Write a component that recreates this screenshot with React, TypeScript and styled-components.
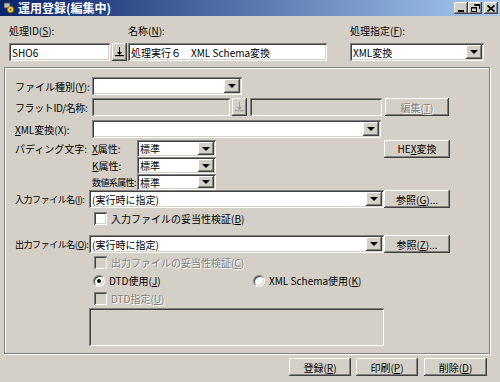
import React from 'react';
import styled, { createGlobalStyle } from 'styled-components';

const GlobalStyle = createGlobalStyle`
    html, body {
        margin: 0;
        padding: 0;
    }
    body {
        font-family: "Noto Sans CJK JP", "Liberation Sans", sans-serif;
        font-size: 10px;
        color: #000;
    }
`;

const sunken = `box-shadow: inset 1px 1px #808080, inset -1px -1px #ffffff, inset 2px 2px #404040, inset -2px -2px #d4d0c8;`;
const raised = `box-shadow: inset -1px -1px #404040, inset 1px 1px #ffffff, inset -2px -2px #808080, inset 2px 2px #d4d0c8;`;

const Window = styled.div`
    width: 500px;
    height: 382px;
    background: #d4d0c8;
    display: flex;
    flex-direction: column;
    overflow: hidden;
`;

const TitleBar = styled.div`
    height: 16px;
    background: linear-gradient(to right, #0a246a, #a6caf0);
    display: flex;
    align-items: center;
    padding: 0 2px 0 3px;
`;

const TitleText = styled.span`
    flex: 1;
    margin-left: 3px;
    color: #fff;
    font-weight: bold;
    font-size: 12px;
    line-height: 16px;
`;

const CaptionButton = styled.div<{ $gap?: number }>`
    width: 14px;
    height: 12px;
    margin-left: ${(p) => p.$gap ?? 0}px;
    background: #d4d0c8;
    ${raised}
    display: flex;
    align-items: center;
    justify-content: center;
`;

const TopSection = styled.div`
    display: flex;
    padding: 8px 0 0 9px;
`;

const FieldColumn = styled.div<{ $w: number }>`
    width: ${(p) => p.$w}px;
    display: flex;
    flex-direction: column;
`;

const TopLabel = styled.div`
    height: 14px;
    line-height: 14px;
    margin-bottom: 5px;
    white-space: nowrap;
`;

const InlineGroup = styled.div`
    display: flex;
    align-items: center;
`;

const Field = styled.div<{ $w: number; $h?: number; $ml?: number; $disabled?: boolean }>`
    width: ${(p) => p.$w}px;
    height: ${(p) => p.$h ?? 18}px;
    margin-left: ${(p) => p.$ml ?? 0}px;
    box-sizing: border-box;
    background: ${(p) => (p.$disabled ? '#d4d0c8' : '#ffffff')};
    ${sunken}
    padding: 2px 2px 2px 3px;
    display: flex;
    align-items: center;
    white-space: nowrap;
    overflow: hidden;
    line-height: 13px;
`;

const ComboBox = styled.div<{ $w: number; $h?: number }>`
    width: ${(p) => p.$w}px;
    height: ${(p) => p.$h ?? 18}px;
    box-sizing: border-box;
    background: #fff;
    ${sunken}
    padding: 2px;
    display: flex;
    align-items: stretch;
`;

const ComboText = styled.div`
    flex: 1;
    padding-left: 1px;
    display: flex;
    align-items: center;
    white-space: nowrap;
    overflow: hidden;
    line-height: 13px;
`;

const ArrowButton = styled.div`
    width: 16px;
    background: #d4d0c8;
    ${raised}
    display: flex;
    align-items: center;
    justify-content: center;
`;

const Triangle = styled.div`
    width: 0;
    height: 0;
    border-left: 4px solid transparent;
    border-right: 4px solid transparent;
    border-top: 4px solid #000;
`;

const Button = styled.div<{ $w: number; $h?: number; $ml?: number; $disabled?: boolean }>`
    width: ${(p) => p.$w}px;
    height: ${(p) => p.$h ?? 18}px;
    margin-left: ${(p) => p.$ml ?? 0}px;
    box-sizing: border-box;
    background: #d4d0c8;
    ${raised}
    display: flex;
    align-items: center;
    justify-content: center;
    white-space: nowrap;
    line-height: 13px;
    color: ${(p) => (p.$disabled ? '#808080' : '#000')};
    text-shadow: ${(p) => (p.$disabled ? '1px 1px #ffffff' : 'none')};
`;

const GroupBox = styled.div`
    margin: 6px 0 0 4px;
    width: 486px;
    height: 287px;
    box-sizing: border-box;
    border: 1px solid #808080;
    box-shadow: 1px 1px 0 #ffffff, inset 1px 1px 0 #ffffff;
    padding: 9px 0 0 10px;
    display: flex;
    flex-direction: column;
`;

const Row = styled.div<{ $mt?: number; $h: number }>`
    display: flex;
    align-items: center;
    height: ${(p) => p.$h}px;
    margin-top: ${(p) => p.$mt ?? 0}px;
`;

const Label = styled.div<{ $w: number; $fs?: number; $ls?: number }>`
    width: ${(p) => p.$w}px;
    flex-shrink: 0;
    white-space: nowrap;
    line-height: 13px;
    font-size: ${(p) => p.$fs ?? 10}px;
    letter-spacing: ${(p) => p.$ls ?? 0}px;
`;

const Spacer = styled.div<{ $w: number }>`
    width: ${(p) => p.$w}px;
    flex-shrink: 0;
`;

const U = styled.span`
    text-decoration: underline;
`;

const CheckItem = styled.div<{ $disabled?: boolean }>`
    display: flex;
    align-items: center;
    white-space: nowrap;
    line-height: 13px;
    color: ${(p) => (p.$disabled ? '#808080' : '#000')};
    text-shadow: ${(p) => (p.$disabled ? '1px 1px #ffffff' : 'none')};
`;

const CheckBox = styled.div<{ $disabled?: boolean }>`
    width: 13px;
    height: 13px;
    box-sizing: border-box;
    margin-right: 4px;
    background: ${(p) => (p.$disabled ? '#d4d0c8' : '#ffffff')};
    ${sunken}
`;

const RadioItem = styled.div<{ $w?: number }>`
    display: flex;
    align-items: center;
    white-space: nowrap;
    line-height: 13px;
    width: ${(p) => (p.$w ? `${p.$w}px` : 'auto')};
`;

const Radio = styled.div<{ $checked?: boolean }>`
    width: 12px;
    height: 12px;
    box-sizing: border-box;
    border-radius: 50%;
    margin-right: 4px;
    background: #fff;
    border: 1px solid;
    border-color: #808080 #ffffff #ffffff #808080;
    box-shadow: inset 1px 1px #404040, inset -1px -1px #d4d0c8;
    display: flex;
    align-items: center;
    justify-content: center;
    &::after {
        content: '';
        width: 4px;
        height: 4px;
        border-radius: 50%;
        background: ${(p) => (p.$checked ? '#000' : 'transparent')};
    }
`;

const TextArea = styled.div`
    margin-left: 74px;
    width: 295px;
    height: 38px;
    box-sizing: border-box;
    background: #d4d0c8;
    ${sunken}
`;

const Footer = styled.div`
    display: flex;
    justify-content: flex-end;
    padding: 4px 13px 0 0;
`;

const Combo: React.FC<{ w: number; h?: number; children?: React.ReactNode }> = ({ w, h, children }) => (
    <ComboBox $w={w} $h={h}>
        <ComboText>{children}</ComboText>
        <ArrowButton>
            <Triangle />
        </ArrowButton>
    </ComboBox>
);

const PickIcon: React.FC<{ color: string }> = ({ color }) => (
    <svg width="9" height="10" viewBox="0 0 9 10">
        <path d="M4 0h1v5h2l-2.5 3L2 5h2z" fill={color} />
        <rect x="0" y="8" width="9" height="1.2" fill={color} />
    </svg>
);

const AppIcon = () => (
    <svg width="12" height="12" viewBox="0 0 12 12">
        <rect x="1" y="1" width="6" height="5" fill="#c0c0c0" stroke="#404040" strokeWidth="0.8" />
        <circle cx="7.5" cy="7.5" r="3.2" fill="#f0d040" stroke="#806000" strokeWidth="0.8" />
        <circle cx="7.5" cy="7.5" r="1" fill="#806000" />
    </svg>
);

const App: React.FC = () => {
    return (
        <>
            <GlobalStyle />
            <Window>
                <TitleBar>
                    <AppIcon />
                    <TitleText>運用登録(編集中)</TitleText>
                    <CaptionButton>
                        <svg width="8" height="7" viewBox="0 0 8 7">
                            <rect x="1" y="5" width="6" height="2" fill="#000" />
                        </svg>
                    </CaptionButton>
                    <CaptionButton $gap={0}>
                        <svg width="9" height="8" viewBox="0 0 9 8">
                            <path d="M3 0h6v5H8V2H4V1H3z M3 0h6v1.5H3z" fill="#000" />
                            <path d="M0 3h6v5H0z M1 4.5v2.5h4V4.5z" fill="#000" fillRule="evenodd" />
                        </svg>
                    </CaptionButton>
                    <CaptionButton $gap={2}>
                        <svg width="8" height="7" viewBox="0 0 8 7">
                            <path d="M0.5 0.5L7.5 6.5M7.5 0.5L0.5 6.5" stroke="#000" strokeWidth="1.6" />
                        </svg>
                    </CaptionButton>
                </TitleBar>

                <TopSection>
                    <FieldColumn $w={119}>
                        <TopLabel>
                            処理ID(<U>S</U>):
                        </TopLabel>
                        <InlineGroup>
                            <Field $w={101}>SHO6</Field>
                            <Button $w={15} $ml={2}>
                                <PickIcon color="#000" />
                            </Button>
                        </InlineGroup>
                    </FieldColumn>
                    <FieldColumn $w={222}>
                        <TopLabel>
                            名称(<U>N</U>):
                        </TopLabel>
                        <Field $w={199}>処理実行６　XML Schema変換</Field>
                    </FieldColumn>
                    <FieldColumn $w={134}>
                        <TopLabel>
                            処理指定(<U>F</U>):
                        </TopLabel>
                        <Combo w={134}>XML変換</Combo>
                    </FieldColumn>
                </TopSection>

                <GroupBox>
                    <Row $h={18}>
                        <Label $w={77}>
                            ファイル種別(<U>Y</U>):
                        </Label>
                        <Combo w={150} />
                    </Row>
                    <Row $h={18} $mt={3}>
                        <Label $w={77} $ls={-0.4}>
                            フラットID/名称:
                        </Label>
                        <Field $w={138} $disabled />
                        <Button $w={15} $ml={2}>
                            <PickIcon color="#a0a0a0" />
                        </Button>
                        <Field $w={132} $ml={3} $disabled />
                        <Button $w={64} $ml={3} $disabled>
                            編集(<U>T</U>)
                        </Button>
                    </Row>
                    <Row $h={18} $mt={4}>
                        <Label $w={77}>
                            <U>X</U>ML変換(X):
                        </Label>
                        <Combo w={289} />
                    </Row>
                    <Row $h={17} $mt={2}>
                        <Label $w={77}>パディング文字:</Label>
                        <Label $w={45}>
                            <U>X</U>属性:
                        </Label>
                        <Combo w={79} h={17}>
                            標準
                        </Combo>
                        <Spacer $w={168} />
                        <Button $w={66} $h={18}>
                            HE<U>X</U>変換
                        </Button>
                    </Row>
                    <Row $h={17}>
                        <Spacer $w={77} />
                        <Label $w={45}>
                            <U>K</U>属性:
                        </Label>
                        <Combo w={79} h={17}>
                            標準
                        </Combo>
                    </Row>
                    <Row $h={16}>
                        <Spacer $w={77} />
                        <Label $w={45} $fs={9} $ls={-0.6}>
                            数値系属性:
                        </Label>
                        <Combo w={79} h={16}>
                            標準
                        </Combo>
                    </Row>
                    <Row $h={18}>
                        <Label $w={74} $fs={9} $ls={-0.45}>
                            入力ファイル名(<U>I</U>):
                        </Label>
                        <Combo w={295}>(実行時に指定)</Combo>
                        <Button $w={66}>
                            参照(<U>G</U>)...
                        </Button>
                    </Row>
                    <Row $h={13} $mt={4}>
                        <Spacer $w={79} />
                        <CheckItem>
                            <CheckBox />
                            入力ファイルの妥当性検証(<U>B</U>)
                        </CheckItem>
                    </Row>
                    <Row $h={18} $mt={10}>
                        <Label $w={74} $fs={9} $ls={-0.45}>
                            出力ファイル名(<U>O</U>):
                        </Label>
                        <Combo w={295}>(実行時に指定)</Combo>
                        <Button $w={66}>
                            参照(<U>Z</U>)...
                        </Button>
                    </Row>
                    <Row $h={13} $mt={3}>
                        <Spacer $w={79} />
                        <CheckItem $disabled>
                            <CheckBox $disabled />
                            出力ファイルの妥当性検証(<U>C</U>)
                        </CheckItem>
                    </Row>
                    <Row $h={13} $mt={5}>
                        <Spacer $w={78} />
                        <RadioItem $w={160}>
                            <Radio $checked />
                            DTD使用(<U>J</U>)
                        </RadioItem>
                        <RadioItem>
                            <Radio />
                            XML Schema使用(<U>K</U>)
                        </RadioItem>
                    </Row>
                    <Row $h={13} $mt={5}>
                        <Spacer $w={79} />
                        <CheckItem $disabled>
                            <CheckBox $disabled />
                            DTD指定(<U>U</U>)
                        </CheckItem>
                    </Row>
                    <Row $h={38} $mt={3}>
                        <TextArea />
                    </Row>
                </GroupBox>

                <Footer>
                    <Button $w={62}>
                        登録(<U>R</U>)
                    </Button>
                    <Button $w={62} $ml={5}>
                        印刷(<U>P</U>)
                    </Button>
                    <Button $w={63} $ml={6}>
                        削除(<U>D</U>)
                    </Button>
                </Footer>
            </Window>
        </>
    );
};

export default App;
